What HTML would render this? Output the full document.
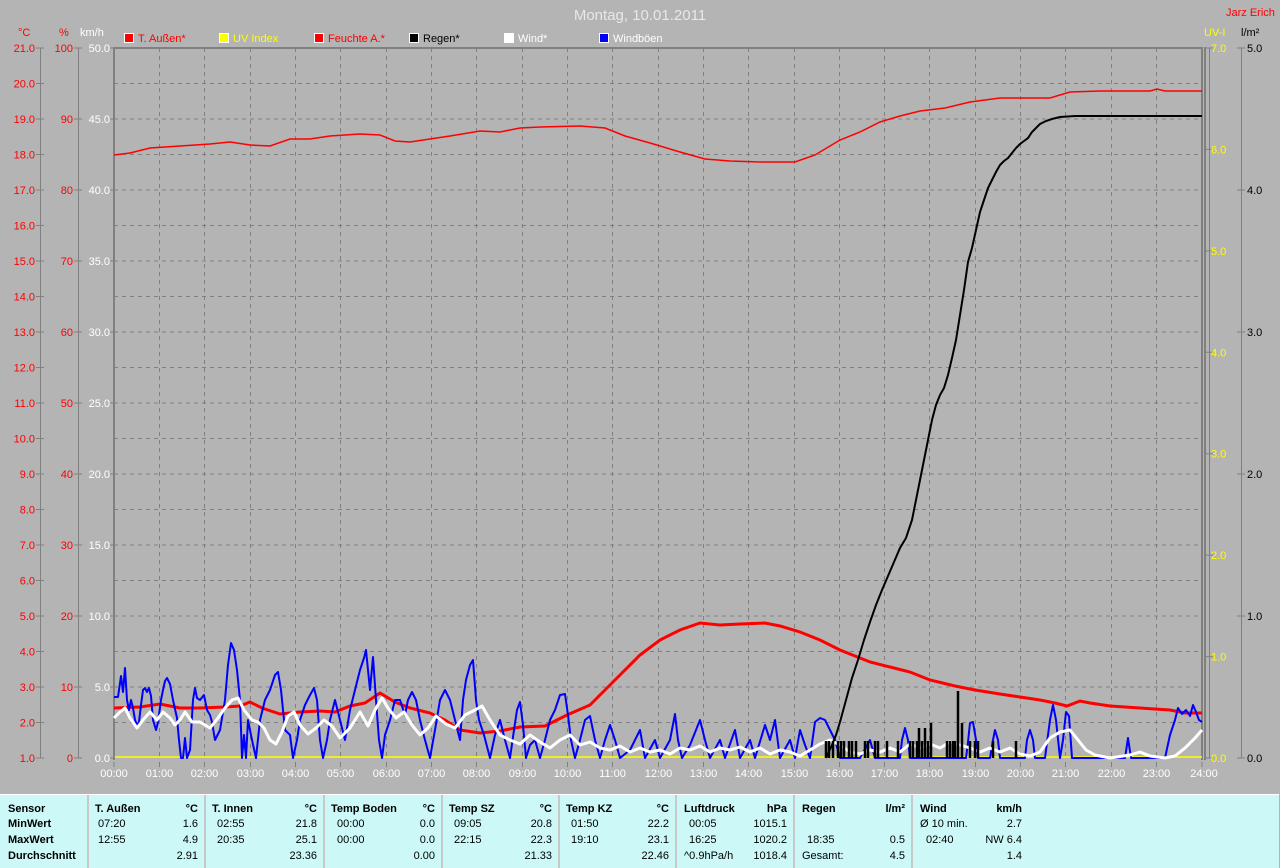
<!DOCTYPE html>
<html><head><meta charset="utf-8"><style>
body{margin:0;width:1280px;height:867px;overflow:hidden;background:#b4b4b4;font-family:"Liberation Sans",Arial,sans-serif}
svg{position:absolute;left:0;top:0}
.tb{position:absolute;left:0;top:794px;width:1279px;height:73px;background:#ccf8f8;border-top:1px solid #fff}
.c{position:absolute;top:0;height:73px;border-right:2px solid #c8c8c8;font-size:11px;color:#000}
.c div{position:absolute;white-space:nowrap}
.b{font-weight:bold}
</style></head><body>
<svg width="1280" height="795" xmlns="http://www.w3.org/2000/svg" font-family="Liberation Sans, Arial, sans-serif" font-size="11">
<text x="640" y="20" text-anchor="middle" fill="#e8e8e8" font-size="15">Montag, 10.01.2011</text>
<text x="1226" y="16" fill="#ff0000" font-size="11">Jarz Erich</text>
<g font-size="11">
<rect x="124.5" y="33.5" width="9" height="9" fill="#f00" stroke="#fff"/><text x="138" y="42" fill="#f00">T. Außen*</text>
<rect x="219.5" y="33.5" width="9" height="9" fill="#ff0" stroke="#fff"/><text x="233" y="42" fill="#ff0">UV Index</text>
<rect x="314.5" y="33.5" width="9" height="9" fill="#f00" stroke="#fff"/><text x="328" y="42" fill="#f00">Feuchte A.*</text>
<rect x="409.5" y="33.5" width="9" height="9" fill="#000" stroke="#fff"/><text x="423" y="42" fill="#000">Regen*</text>
<rect x="504.5" y="33.5" width="9" height="9" fill="#fff" stroke="#fff"/><text x="518" y="42" fill="#fff">Wind*</text>
<rect x="599.5" y="33.5" width="9" height="9" fill="#00f" stroke="#fff"/><text x="613" y="42" fill="#fff">Windböen</text>
</g>
<g font-size="11">
<text x="18" y="36" fill="#f00">°C</text><text x="59" y="36" fill="#f00">%</text><text x="80" y="36" fill="#fff">km/h</text>
<text x="1204" y="36" fill="#ff0">UV-I</text><text x="1241" y="36" fill="#000">l/m²</text>
</g>
<g stroke="#808080" stroke-dasharray="4,4" stroke-width="1">
<path d="M114 83.5H1202M114 119H1202M114 154.5H1202M114 190H1202M114 225.5H1202M114 261H1202M114 296.5H1202M114 332H1202M114 367.5H1202M114 403H1202M114 438.5H1202M114 474H1202M114 509.5H1202M114 545H1202M114 580.5H1202M114 616H1202M114 651.5H1202M114 687H1202M114 722.5H1202"/>
<path d="M159.5 48V758M204.5 48V758M250.5 48V758M295.5 48V758M340.5 48V758M386.5 48V758M431.5 48V758M476.5 48V758M522.5 48V758M567.5 48V758M612.5 48V758M658.5 48V758M703.5 48V758M748.5 48V758M794.5 48V758M839.5 48V758M884.5 48V758M929.5 48V758M975.5 48V758M1020.5 48V758M1065.5 48V758M1111.5 48V758M1156.5 48V758"/>
</g>
<g stroke="#808080" fill="none">
<path d="M114 48H1203" stroke-width="2"/>
<path d="M114 47V760" stroke-width="2"/>
<path d="M1202 47V760M1205 47V760" stroke-width="2"/>
<path d="M114 762V767M159.5 762V767M204.5 762V767M250.5 762V767M295.5 762V767M340.5 762V767M386.5 762V767M431.5 762V767M476.5 762V767M522.5 762V767M567.5 762V767M612.5 762V767M658.5 762V767M703.5 762V767M748.5 762V767M794.5 762V767M839.5 762V767M884.5 762V767M929.5 762V767M975.5 762V767M1020.5 762V767M1065.5 762V767M1111.5 762V767M1156.5 762V767M1202 762V767"/>
<path d="M40.5 48V758M78.5 48V758M1209.5 48V758M1241.5 48V758"/>
<path d="M36 48H44M36 83.5H44M36 119H44M36 154.5H44M36 190H44M36 225.5H44M36 261H44M36 296.5H44M36 332H44M36 367.5H44M36 403H44M36 438.5H44M36 474H44M36 509.5H44M36 545H44M36 580.5H44M36 616H44M36 651.5H44M36 687H44M36 722.5H44M36 758H44"/>
<path d="M74 48H82M74 119H82M74 190H82M74 261H82M74 332H82M74 403H82M74 474H82M74 545H82M74 616H82M74 687H82M74 758H82"/>
<path d="M110 48H114M110 119H114M110 190H114M110 261H114M110 332H114M110 403H114M110 474H114M110 545H114M110 616H114M110 687H114M110 758H114"/>
<path d="M1205 48H1213M1205 149.4H1213M1205 250.9H1213M1205 352.3H1213M1205 453.7H1213M1205 555.1H1213M1205 656.6H1213M1205 758H1213"/>
<path d="M1237 48H1245M1237 190H1245M1237 332H1245M1237 474H1245M1237 616H1245M1237 758H1245"/>
</g>
<g fill="#f00" text-anchor="end">
<text x="35" y="52">21.0</text><text x="35" y="87.5">20.0</text><text x="35" y="123">19.0</text><text x="35" y="158.5">18.0</text><text x="35" y="194">17.0</text><text x="35" y="229.5">16.0</text><text x="35" y="265">15.0</text><text x="35" y="300.5">14.0</text><text x="35" y="336">13.0</text><text x="35" y="371.5">12.0</text><text x="35" y="407">11.0</text><text x="35" y="442.5">10.0</text><text x="35" y="478">9.0</text><text x="35" y="513.5">8.0</text><text x="35" y="549">7.0</text><text x="35" y="584.5">6.0</text><text x="35" y="620">5.0</text><text x="35" y="655.5">4.0</text><text x="35" y="691">3.0</text><text x="35" y="726.5">2.0</text><text x="35" y="762">1.0</text>
<text x="73" y="52">100</text><text x="73" y="123">90</text><text x="73" y="194">80</text><text x="73" y="265">70</text><text x="73" y="336">60</text><text x="73" y="407">50</text><text x="73" y="478">40</text><text x="73" y="549">30</text><text x="73" y="620">20</text><text x="73" y="691">10</text><text x="73" y="762">0</text>
</g>
<g fill="#fff" text-anchor="end">
<text x="110" y="52">50.0</text><text x="110" y="123">45.0</text><text x="110" y="194">40.0</text><text x="110" y="265">35.0</text><text x="110" y="336">30.0</text><text x="110" y="407">25.0</text><text x="110" y="478">20.0</text><text x="110" y="549">15.0</text><text x="110" y="620">10.0</text><text x="110" y="691">5.0</text><text x="110" y="762">0.0</text>
</g>
<g fill="#ff0">
<text x="1211" y="52">7.0</text><text x="1211" y="153.4">6.0</text><text x="1211" y="254.9">5.0</text><text x="1211" y="356.3">4.0</text><text x="1211" y="457.7">3.0</text><text x="1211" y="559.1">2.0</text><text x="1211" y="660.6">1.0</text><text x="1211" y="762">0.0</text>
</g>
<g fill="#000">
<text x="1247" y="52">5.0</text><text x="1247" y="194">4.0</text><text x="1247" y="336">3.0</text><text x="1247" y="478">2.0</text><text x="1247" y="620">1.0</text><text x="1247" y="762">0.0</text>
</g>
<g fill="#fff" text-anchor="middle">
<text x="114" y="777">00:00</text><text x="159.5" y="777">01:00</text><text x="204.5" y="777">02:00</text><text x="250.5" y="777">03:00</text><text x="295.5" y="777">04:00</text><text x="340.5" y="777">05:00</text><text x="386.5" y="777">06:00</text><text x="431.5" y="777">07:00</text><text x="476.5" y="777">08:00</text><text x="522.5" y="777">09:00</text><text x="567.5" y="777">10:00</text><text x="612.5" y="777">11:00</text><text x="658.5" y="777">12:00</text><text x="703.5" y="777">13:00</text><text x="748.5" y="777">14:00</text><text x="794.5" y="777">15:00</text><text x="839.5" y="777">16:00</text><text x="884.5" y="777">17:00</text><text x="929.5" y="777">18:00</text><text x="975.5" y="777">19:00</text><text x="1020.5" y="777">20:00</text><text x="1065.5" y="777">21:00</text><text x="1111.5" y="777">22:00</text><text x="1156.5" y="777">23:00</text><text x="1204" y="777">24:00</text>
</g>
<path d="M115 757H1202" stroke="#ff0" stroke-width="1.5"/>
<path d="M114 155L130 153L150 148L180 146L210 144L230 142L250 145L270 146L290 139L310 139L330 136L360 134L380 135L395 141L410 142L430 139L450 136L480 131L500 132L520 128L540 127L580 126L605 128L625 136L650 143L680 152L705 159L730 161L760 162L795 162L815 155L840 140L860 132L880 122L900 116L920 111L945 108L970 102L1000 98L1050 98L1070 92L1100 91L1150 91L1157 89L1165 91L1202 91" stroke="#f00" stroke-width="1.5" fill="none"/>
<path d="M114 708L140 707L160 704L180 708L200 708L225 707L240 706L250 702L262 708L280 714L300 712L320 711L335 712L350 706L365 703L380 693L395 702L410 708L430 713L445 720L460 730L480 733L500 731L520 727L545 726L567 715L590 705L605 690L620 675L640 655L660 640L680 630L700 623L720 625L740 624L765 623L780 626L800 632L820 640L840 650L855 656L870 662L890 667L910 672L930 680L955 686L975 690L1000 694L1020 697L1040 700L1055 703L1067 706L1080 701L1090 703L1110 706L1140 708L1170 710L1185 713L1202 713" stroke="#f00" stroke-width="3" fill="none"/>
<path d="M114 697L118 697L121 676L123 692L125 668L127 700L129 710L131 700L133 708L135 720L137 725L139 722L141 705L143 690L145 688L147 692L149 688L151 696L153 720L156 730L158 722L161 700L163 690L165 681L167 678L170 684L173 700L177 718L179 740L181 758L183 758L185 738L187 758L190 750L193 700L195 688L197 698L200 700L204 695L207 710L210 715L212 722L215 740L220 730L225 700L228 665L231 643L234 650L237 670L240 700L242 758L244 735L246 758L248 720L252 740L256 758L260 720L265 700L270 690L275 675L278 672L281 690L285 730L290 735L293 758L297 740L300 720L305 705L310 695L314 688L317 700L320 740L323 758L327 740L330 720L335 700L340 720L345 740L350 710L355 690L360 670L364 658L366 650L368 670L370 690L373 657L376 700L379 740L382 758L385 735L390 720L395 700L400 700L405 715L408 700L412 692L416 700L420 720L425 740L430 758L435 730L440 700L445 690L450 700L455 720L460 740L463 700L466 680L470 665L473 660L476 700L479 720L484 735L490 758L495 735L500 720L505 740L510 758L514 730L517 710L520 702L523 725L526 758L530 745L535 740L540 758L545 740L550 720L555 710L560 695L565 694L568 715L571 740L575 758L580 740L585 720L590 716L595 740L600 758L605 740L610 725L615 740L620 758L630 750L640 730L645 758L655 740L660 758L670 740L675 714L678 740L682 758L690 745L700 720L705 740L710 758L720 740L725 758L735 730L740 758L750 740L755 758L765 725L770 740L775 720L780 758L790 740L795 758L800 730L805 745L810 758L815 722L820 718L825 720L830 730L835 740L840 758L860 758L870 740L875 758L900 758L902 740L905 728L908 740L910 758L966 758L968 742L970 723L973 722L976 740L978 758L990 758L993 740L995 730L998 740L1000 758L1025 758L1027 740L1030 730L1033 740L1035 758L1045 758L1048 735L1050 720L1053 705L1056 720L1060 758L1063 740L1066 712L1069 716L1072 758L1125 758L1128 738L1131 758L1165 758L1170 735L1175 720L1178 708L1182 714L1186 710L1190 716L1193 705L1196 712L1199 720L1202 722" stroke="#00f" stroke-width="2" fill="none" stroke-linejoin="round"/>
<path d="M114 718L120 712L125 708L130 718L137 728L143 720L150 712L157 720L163 712L170 718L175 725L180 720L185 712L192 722L200 722L210 728L218 718L225 708L232 700L238 698L244 710L252 720L258 722L264 728L270 740L276 744L282 732L288 716L294 712L300 725L308 734L316 728L324 720L332 726L340 738L350 728L360 712L368 726L375 710L382 698L388 708L396 718L404 712L412 725L420 735L428 728L436 716L446 724L455 728L465 715L475 710L482 706L490 720L500 735L510 740L520 744L530 735L540 742L550 748L560 740L570 735L580 745L590 742L600 748L610 750L620 746L630 752L640 748L650 752L660 750L670 754L680 748L690 750L700 746L710 752L720 748L730 750L740 747L750 752L760 748L770 754L780 750L790 752L800 756L810 750L820 744L830 740L840 745L850 752L860 754L870 750L880 752L890 748L900 752L910 744L920 748L930 744L940 748L950 742L960 745L970 748L980 752L990 748L1000 752L1010 748L1020 754L1030 756L1040 752L1050 738L1060 732L1070 730L1078 740L1086 750L1095 755L1110 758L1130 755L1140 752L1150 756L1165 758L1175 756L1185 748L1195 738L1202 730" stroke="#fff" stroke-width="3" fill="none" stroke-linejoin="round"/>
<path d="M826 758V741M829 758V741M833 758V741M838 758V741M841 758V741M844 758V741M849 758V741M852 758V741M856 758V741M865 758V741M868 758V741M875 758V741M878 758V741M887 758V741M898 758V741M910 758V741M913 758V741M917 758V741M919 758V728M922 758V741M925 758V728M928 758V741M931 758V723M947 758V741M950 758V741M953 758V741M955 758V741M958 758V691M962 758V723M970 758V741M975 758V741M978 758V741M993 758V741M1016 758V741" stroke="#000" stroke-width="2.5"/>
<path d="M826 758L832 745L836 735L840 722L846 700L852 678L858 660L864 640L870 622L876 605L882 590L888 576L894 562L900 548L906 538L912 520L916 500L920 480L924 460L928 440L932 420L936 405L940 395L944 388L948 375L952 358L956 340L960 315L964 290L968 262L972 248L976 230L980 212L984 200L988 188L992 180L996 172L1000 165L1004 161L1008 158L1012 153L1016 148L1020 144L1024 141L1028 138L1032 132L1036 128L1040 124L1046 121L1052 119L1060 117L1075 116L1202 116" stroke="#000" stroke-width="2" fill="none"/>
</svg>
<div class="tb">
<div class="c" style="left:0;width:87px"><div class="b" style="left:8px;top:8px">Sensor</div><div class="b" style="left:8px;top:23px">MinWert</div><div class="b" style="left:8px;top:39px">MaxWert</div><div class="b" style="left:8px;top:55px">Durchschnitt</div></div>
<div class="c" style="left:89px;width:115px"><div class="b" style="left:6px;top:8px">T. Außen</div><div class="b" style="right:6px;top:8px">°C</div><div style="left:9px;top:23px">07:20</div><div style="right:6px;top:23px">1.6</div><div style="left:9px;top:39px">12:55</div><div style="right:6px;top:39px">4.9</div><div style="right:6px;top:55px">2.91</div></div>
<div class="c" style="left:206px;width:117px"><div class="b" style="left:6px;top:8px">T. Innen</div><div class="b" style="right:6px;top:8px">°C</div><div style="left:11px;top:23px">02:55</div><div style="right:6px;top:23px">21.8</div><div style="left:11px;top:39px">20:35</div><div style="right:6px;top:39px">25.1</div><div style="right:6px;top:55px">23.36</div></div>
<div class="c" style="left:325px;width:116px"><div class="b" style="left:6px;top:8px">Temp Boden</div><div class="b" style="right:6px;top:8px">°C</div><div style="left:12px;top:23px">00:00</div><div style="right:6px;top:23px">0.0</div><div style="left:12px;top:39px">00:00</div><div style="right:6px;top:39px">0.0</div><div style="right:6px;top:55px">0.00</div></div>
<div class="c" style="left:443px;width:115px"><div class="b" style="left:6px;top:8px">Temp SZ</div><div class="b" style="right:6px;top:8px">°C</div><div style="left:11px;top:23px">09:05</div><div style="right:6px;top:23px">20.8</div><div style="left:11px;top:39px">22:15</div><div style="right:6px;top:39px">22.3</div><div style="right:6px;top:55px">21.33</div></div>
<div class="c" style="left:560px;width:115px"><div class="b" style="left:6px;top:8px">Temp KZ</div><div class="b" style="right:6px;top:8px">°C</div><div style="left:11px;top:23px">01:50</div><div style="right:6px;top:23px">22.2</div><div style="left:11px;top:39px">19:10</div><div style="right:6px;top:39px">23.1</div><div style="right:6px;top:55px">22.46</div></div>
<div class="c" style="left:677px;width:116px"><div class="b" style="left:7px;top:8px">Luftdruck</div><div class="b" style="right:6px;top:8px">hPa</div><div style="left:12px;top:23px">00:05</div><div style="right:6px;top:23px">1015.1</div><div style="left:12px;top:39px">16:25</div><div style="right:6px;top:39px">1020.2</div><div style="left:7px;top:55px">^0.9hPa/h</div><div style="right:6px;top:55px">1018.4</div></div>
<div class="c" style="left:795px;width:116px"><div class="b" style="left:7px;top:8px">Regen</div><div class="b" style="right:6px;top:8px">l/m²</div><div style="left:12px;top:39px">18:35</div><div style="right:6px;top:39px">0.5</div><div style="left:7px;top:55px">Gesamt:</div><div style="right:6px;top:55px">4.5</div></div>
<div class="c" style="left:913px;width:115px;border-right:none"><div class="b" style="left:7px;top:8px">Wind</div><div class="b" style="right:6px;top:8px">km/h</div><div style="left:7px;top:23px">Ø 10 min.</div><div style="right:6px;top:23px">2.7</div><div style="left:13px;top:39px">02:40</div><div style="right:6px;top:39px">NW 6.4</div><div style="right:6px;top:55px">1.4</div></div>
</div>
</body></html>
